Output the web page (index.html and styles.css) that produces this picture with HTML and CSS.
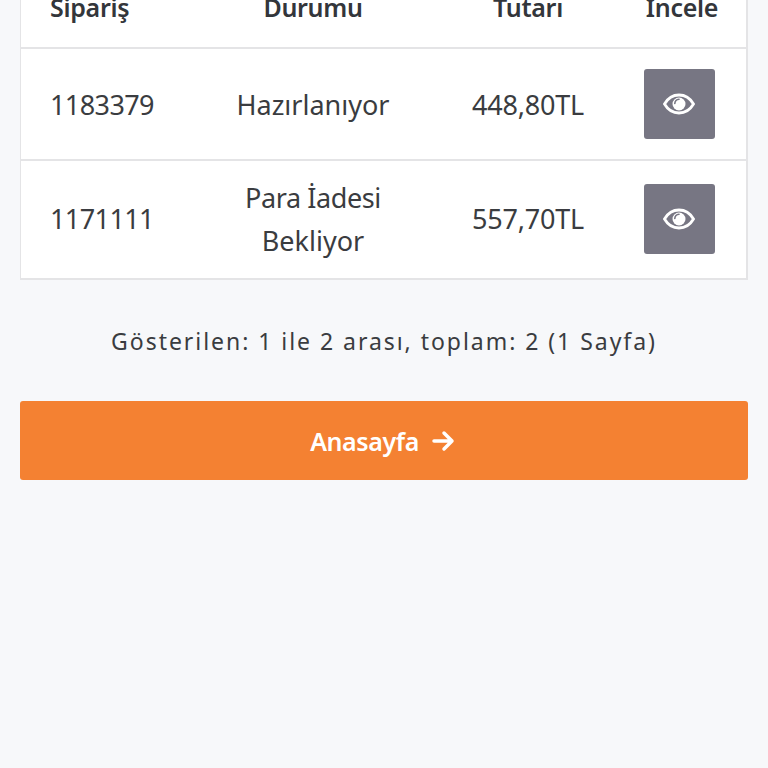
FILE: index.html
```html
<!DOCTYPE html>
<html lang="tr">
<head>
<meta charset="utf-8">
<title>Siparişlerim</title>
<link rel="stylesheet" href="styles.css">
</head>
<body>
<main class="page">
  <div class="table">
    <div class="row head">
      <div class="cell first">Sipariş</div>
      <div class="cell">Durumu</div>
      <div class="cell">Tutarı</div>
      <div class="cell">İncele</div>
    </div>
    <div class="row order">
      <div class="cell first id">1183379</div>
      <div class="cell">Hazırlanıyor</div>
      <div class="cell price">448,80TL</div>
      <div class="cell"><a class="view" href="#"><svg viewBox="0 0 32 24" width="32" height="24" aria-hidden="true"><path class="eye" d="M1.500 12C5 6 10 3 16 3S27 6 30.500 12C27 18 22 21 16 21S5 18 1.500 12Z"/><circle class="iris" cx="16" cy="12" r="6.500"/><path class="glint" d="M11.800 11.500C12 9 13.800 7.500 16 7.300"/></svg></a></div>
    </div>
    <div class="row order last">
      <div class="cell first id">1171111</div>
      <div class="cell"><span class="status-wrap">Para İadesi</span><br>Bekliyor</div>
      <div class="cell price">557,70TL</div>
      <div class="cell"><a class="view" href="#"><svg viewBox="0 0 32 24" width="32" height="24" aria-hidden="true"><path class="eye" d="M1.500 12C5 6 10 3 16 3S27 6 30.500 12C27 18 22 21 16 21S5 18 1.500 12Z"/><circle class="iris" cx="16" cy="12" r="6.500"/><path class="glint" d="M11.800 11.500C12 9 13.800 7.500 16 7.300"/></svg></a></div>
    </div>
  </div>
  <p class="summary">Gösterilen: 1 ile 2 arası, toplam: 2 (1 Sayfa)</p>
  <a class="home" href="#">Anasayfa <svg viewBox="0 0 24 24" width="24" height="24" aria-hidden="true"><path d="M3 12H21M13 4l8 8-8 8"/></svg></a>
</main>
</body>
</html>
```
FILE: styles.css
```css
* { box-sizing: border-box; }
html, body { margin: 0; height: 100%; }
body {
  background: #f7f8fa;
  color: #3a3c40;
  font-family: "Noto Sans", "Open Sans", sans-serif;
  overflow: hidden;
}
.page { padding: 0 20px; }
.table {
  background: #fff;
  border: solid #e4e4e6;
  border-width: 0 2px 2px 1px;
}
.row {
  display: grid;
  grid-template-columns: 181px 222px 208px 94px 1fr;
  align-items: center;
  border-bottom: 2px solid #e4e4e6;
}
.row.last { border-bottom: 0; height: 117px; padding-bottom: 2px; }
.order { height: 112px; font-size: 27px; }
.head {
  height: 49px;
  align-items: end;
  align-content: end;
  overflow: hidden;
  padding-bottom: 23px;
  font-size: 25px;
  font-weight: 600;
  letter-spacing: -0.3px;
  color: #33363b;
}
.cell { text-align: center; line-height: 43px; }
.id { letter-spacing: -0.6px; }
.price { letter-spacing: -0.2px; }
.status-wrap { letter-spacing: -0.4px; }
.head .cell { line-height: 34px; }
.head .cell:last-child { padding-left: 6px; }
.first { text-align: left; padding-left: 29px; }
.view {
  display: flex;
  align-items: center;
  justify-content: center;
  width: 71px;
  height: 70px;
  margin: 0 auto;
  background: #777683;
  border-radius: 3px;
}
.eye { fill: none; stroke: #fff; stroke-width: 2.800px; }
.iris { fill: #fff; }
.glint { fill: none; stroke: #777683; stroke-width: 1.600px; stroke-linecap: round; }
.summary {
  margin: 44px 0 43px;
  text-align: center;
  font-size: 23px;
  line-height: 34px;
  letter-spacing: 1.960px;
}
.home {
  display: flex;
  align-items: center;
  justify-content: center;
  gap: 12px;
  height: 79px;
  padding-right: 3px;
  background: #f48132;
  border-radius: 3px;
  color: #fff;
  font-size: 25px;
  font-weight: 600;
  letter-spacing: -0.4px;
  text-decoration: none;
}
.home svg { fill: none; stroke: #fff; stroke-width: 3.500px; stroke-linecap: round; stroke-linejoin: round; }
```
